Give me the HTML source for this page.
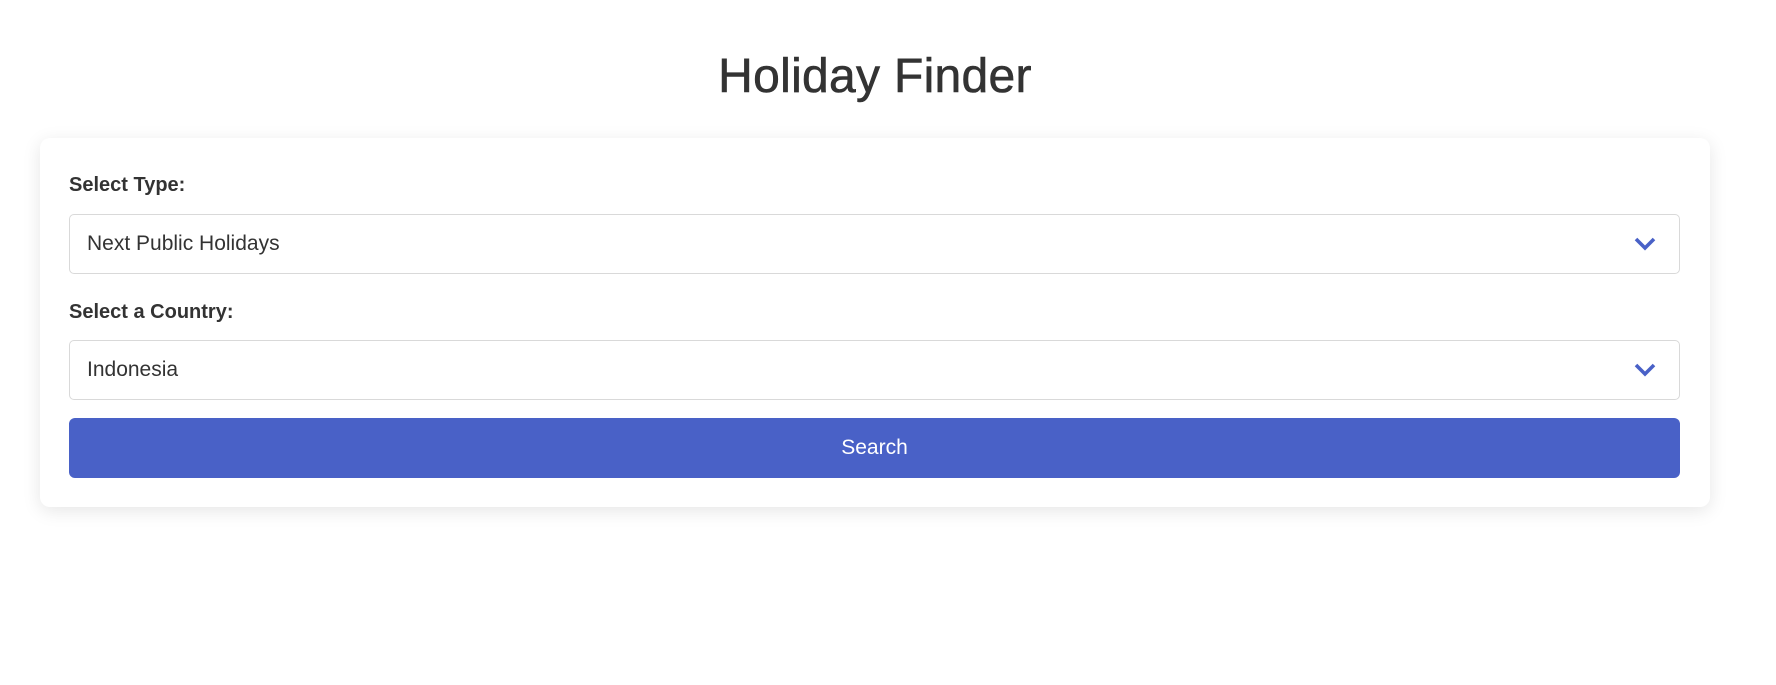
<!DOCTYPE html>
<html><head><style>
*{box-sizing:border-box}
body{margin:0;background:#fff;font-family:"Liberation Sans",sans-serif;color:#333;width:1776px;height:685px;overflow:hidden}
h1{position:absolute;left:0;width:1750px;top:47px;margin:0;text-align:center;font-size:48px;font-weight:normal;line-height:60px;letter-spacing:0.3px;-webkit-text-stroke:0.6px #333}
.card{position:absolute;left:40px;top:138px;width:1670px;height:369px;background:#fff;border-radius:10px;box-shadow:0 4px 18px rgba(0,0,0,0.10)}
.lbl{position:absolute;left:29px;font-weight:bold;font-size:20px}
.sel{position:absolute;left:29px;width:1611px;height:60px;border:1px solid #d9d9d9;border-radius:5px;font-size:21px;padding-left:17px;line-height:58px}
.sel svg{position:absolute;right:23px;top:21px}
.btn{position:absolute;left:29px;top:280px;width:1611px;height:60px;background:#4961c7;border-radius:6px;color:#fff;font-size:21px;text-align:center;line-height:60px}
</style></head><body>
<h1>Holiday Finder</h1>
<div class="card">
<div class="lbl" style="top:36px">Select Type:</div>
<div class="sel" style="top:76px">Next Public Holidays<svg width="22" height="16" viewBox="0 0 22 16"><path d="M2 3l9 9 9-9" fill="none" stroke="#4961c7" stroke-width="3.6"/></svg></div>
<div class="lbl" style="top:163px">Select a Country:</div>
<div class="sel" style="top:202px">Indonesia<svg width="22" height="16" viewBox="0 0 22 16"><path d="M2 3l9 9 9-9" fill="none" stroke="#4961c7" stroke-width="3.6"/></svg></div>
<div class="btn">Search</div>
</div>
</body></html>
